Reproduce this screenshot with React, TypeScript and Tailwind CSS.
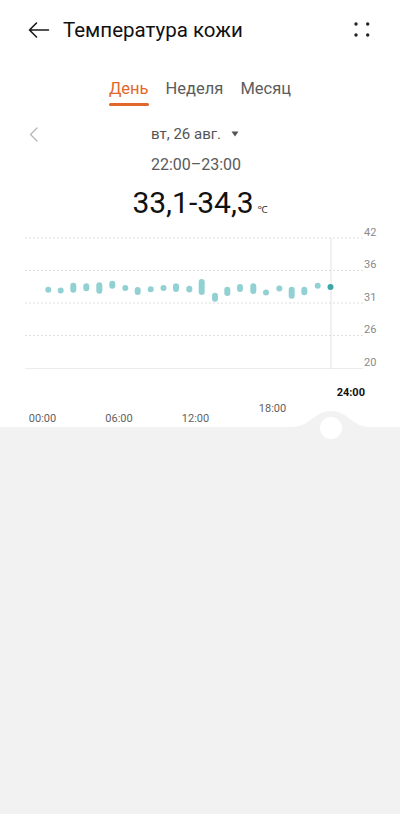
import React from "react";

const dots: [number, number, number][] = [
  [48.3, 286.7, 292.7],
  [60.7, 287.4, 293.4],
  [73.3, 282.7, 292.7],
  [86.3, 283.3, 291.3],
  [99.3, 282.3, 293.7],
  [112.3, 280.7, 288.7],
  [125.3, 285, 291],
  [137.7, 287, 295],
  [150.7, 286.3, 292.3],
  [163.5, 285, 291],
  [176, 283.3, 292],
  [189.3, 285.8, 292.5],
  [201.7, 279, 295],
  [215, 292.7, 301.7],
  [227.3, 286.7, 296],
  [240, 284, 292],
  [253.3, 283.3, 294],
  [266, 289.5, 295.5],
  [279.3, 285.6, 291.6],
  [291.7, 286.7, 298.7],
  [304.3, 286.7, 295.3],
  [317.7, 282.7, 288.7],
  [330.5, 284, 290],
];

const gridYs = [13, 45.5, 78, 110.5];
const yLabels = ["42", "36", "31", "26", "20"];

function Chart() {
  const T = 225;
  return (
    <svg width="400" height="150" viewBox="0 0 400 150" className="block">
      {gridYs.map((y) => (
        <line key={y} x1="25" x2="363" y1={y} y2={y} stroke="#dedede" strokeWidth="1" strokeDasharray="2 2" />
      ))}
      <line x1="25" x2="363" y1="143.5" y2="143.5" stroke="#ececec" strokeWidth="1" />
      <line x1="331" x2="331" y1="13" y2="144" stroke="#e2e2e2" strokeWidth="1" />
      {[13, 45.5, 78, 110.5, 143.5].map((y, i) => (
        <text key={i} x="364" y={y - 2.5} fontSize="11" fill="#8a8a8a" fontFamily="Roboto, sans-serif">
          {yLabels[i]}
        </text>
      ))}
      {dots.map(([x, t, b], i) => (
        <rect
          key={i}
          x={x - 3}
          y={t - T}
          width="6"
          height={b - t}
          rx="3"
          fill={i === dots.length - 1 ? "#3fa6a8" : "#92d1d3"}
        />
      ))}
    </svg>
  );
}

function Scrubber() {
  const T = 375;
  const labels: [string, number, number, boolean][] = [
    ["00:00", 42.5, 422.3, false],
    ["06:00", 119, 422.3, false],
    ["12:00", 195.5, 422.3, false],
    ["18:00", 272.5, 411.7, false],
    ["24:00", 350.8, 395.7, true],
  ];
  return (
    <svg width="400" height="70" viewBox="0 0 400 70" className="block">
      <path
        d={`M0 ${427 - T} L292 ${427 - T} C310 ${427 - T} 314 ${411 - T} 331 ${411 - T} C348 ${411 - T} 352 ${427 - T} 370 ${427 - T} L400 ${427 - T} L400 70 L0 70 Z`}
        fill="#f2f2f2"
      />
      <circle cx="331" cy={428 - T} r="11" fill="#ffffff" />
      {labels.map(([t, x, y, bold]) => (
        <text
          key={t}
          x={x}
          y={y - T}
          textAnchor="middle"
          fontSize="11"
          fontWeight={bold ? 700 : 400}
          fill={bold ? "#111111" : "#5f5f5f"}
          fontFamily="Roboto, sans-serif"
        >
          {t}
        </text>
      ))}
    </svg>
  );
}

export default function App() {
  return (
    <div className="w-[400px] h-[814px] bg-white flex flex-col overflow-hidden" style={{ fontFamily: "Roboto, 'Noto Sans', sans-serif" }}>
      {/* Header */}
      <div className="h-[60px] flex items-center justify-between pl-[28px] pr-[30px]">
        <div className="flex items-center">
          <svg width="22" height="22" viewBox="0 0 22 22" className="block">
            <path d="M1.5 11 H20.5 M8.5 4 L1.5 11 L8.5 18" fill="none" stroke="#1a1a1a" strokeWidth="1.6" strokeLinecap="round" strokeLinejoin="round" />
          </svg>
          <span className="ml-[13px] text-[20.5px] leading-[28px] text-[#111111]">Температура кожи</span>
        </div>
        <svg width="16" height="16" viewBox="0 0 16 16" className="block">
          <circle cx="2" cy="2" r="1.7" fill="#222" />
          <circle cx="13.7" cy="2" r="1.7" fill="#222" />
          <circle cx="2" cy="13" r="1.7" fill="#222" />
          <circle cx="13.7" cy="13" r="1.7" fill="#222" />
        </svg>
      </div>

      {/* Tabs */}
      <div className="mt-[17px] flex justify-center gap-[17px] text-[16.5px] leading-[24px]">
        <div className="flex flex-col items-stretch">
          <span className="text-[#e2672b]">День</span>
          <div className="mt-[2px] h-[3px] rounded-full bg-[#e2672b]" />
        </div>
        <span className="text-[#5c5c5c]">Неделя</span>
        <span className="text-[#5c5c5c]">Месяц</span>
      </div>

      {/* Date row */}
      <div className="mt-[16px] grid grid-cols-[1fr_auto_1fr] items-center h-[24px] pr-[10px]">
        <div className="pl-[29px] flex items-center">
          <svg width="9" height="15" viewBox="0 0 9 15" className="block">
            <path d="M8 1 L1.5 7.5 L8 14" fill="none" stroke="#b5b5b5" strokeWidth="1.3" strokeLinecap="round" strokeLinejoin="round" />
          </svg>
        </div>
        <div className="flex items-center text-[15px] text-[#555555]">
          <span>вт, 26 авг.</span>
          <svg width="8" height="6" viewBox="0 0 8 6" className="ml-[10px] block">
            <path d="M0.5 0.5 H7.5 L4 5.5 Z" fill="#555555" />
          </svg>
        </div>
        <div />
      </div>

      {/* Time range */}
      <div className="mt-[8px] h-[22px] flex justify-center items-center pr-[8px] text-[16px] text-[#5a5a5a]">
        22:00–23:00
      </div>

      {/* Value */}
      <div className="mt-[9px] h-[36px] flex justify-center items-baseline">
        <span className="text-[30px] leading-[36px] text-[#111111]">33,1-34,3</span>
        <span className="ml-[4px] text-[10px] text-[#333333]">℃</span>
      </div>

      <div className="mt-[4px]">
        <Chart />
      </div>
      <Scrubber />
      <div className="flex-1 bg-[#f2f2f2]" />
    </div>
  );
}
